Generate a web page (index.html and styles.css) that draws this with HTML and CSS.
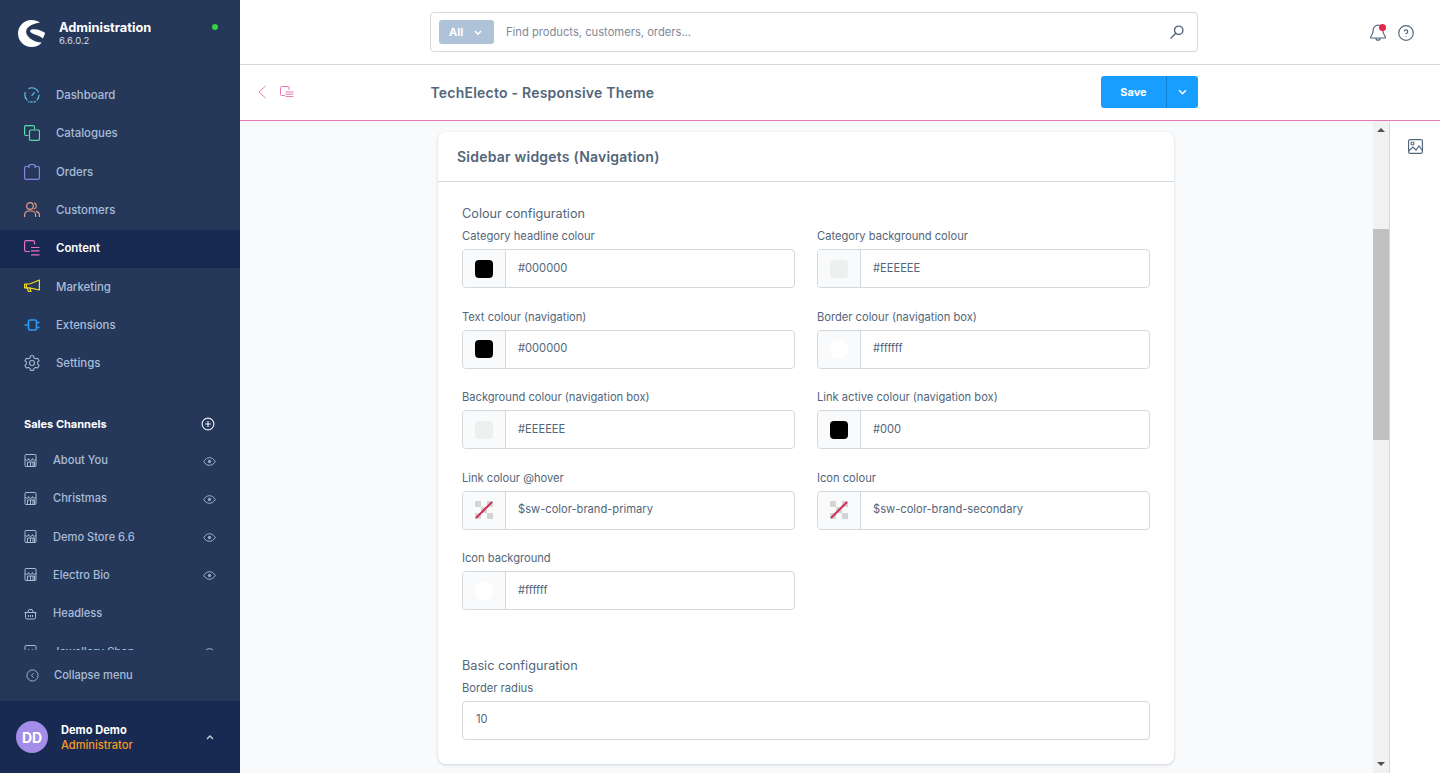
FILE: index.html
```html
<!DOCTYPE html>
<html lang="en">
<head>
<meta charset="utf-8">
<title>TechElecto - Responsive Theme</title>
<link rel="stylesheet" href="styles.css">
</head>
<body>
<div class="app">
  <aside class="sidebar">
    <div class="brand">
      <svg class="logo" viewBox="0 0 27 27"><path fill="#fff" d="M22 2.500C19.800.9 16.800 0 13.500 0 6 0 0 6 0 13.500S6 27 13.500 27c4.200 0 7.800-1.700 10.300-4.600-3.400-.1-8.800-1.300-12-4.200C8.600 15.300 7.400 12.500 8.500 9.700 10 6 16 3.400 22 2.500zM13.800 9.600c-1.400.4-2.100 1.200-1.500 2.100.9 1.300 3.300 2.300 6 3.200 2.800 1 5 1.900 6.500 3.500 1.100-1.700 2-3.800 2.200-5.600-3.800-2.300-9-4.300-13.200-3.200z"/></svg>
      <div class="brand-text">
        <div class="brand-name">Administration</div>
        <div class="brand-version">6.6.0.2</div>
      </div>
      <span class="status-dot"></span>
    </div>
    <nav class="main-nav">
      <a class="nav-item"><svg class="nav-icon" viewBox="0 0 16 16" fill="none" stroke="#5fc3e6" stroke-width="1.200" stroke-linecap="round"><path d="M5 1.400A7 7 0 0 1 14.300 5M15 8a7 7 0 0 1-1.900 4.800M3 12.900A7 7 0 0 1 1.300 5.500M10.300 5.700 8 8.300"/><path d="M11.500 14.800H4.500" stroke-dasharray="1.500 1.800"/></svg><span>Dashboard</span></a>
      <a class="nav-item"><svg class="nav-icon" viewBox="0 0 16 16" fill="none" stroke="#5bdba8" stroke-width="1.200"><path d="M4.500 10.500H2A1.500 1.500 0 0 1 .6 9V2A1.500 1.500 0 0 1 2 .6h7A1.500 1.500 0 0 1 10.500 2v2.500"/><rect x="5.500" y="5" width="10" height="10.400" rx="1.500"/></svg><span>Catalogues</span></a>
      <a class="nav-item"><svg class="nav-icon" viewBox="0 0 16 16" fill="none" stroke="#8b87e0" stroke-width="1.200"><path d="M5 2.500H2A1.500 1.500 0 0 0 .6 4v10A1.500 1.500 0 0 0 2 15.400h12a1.500 1.500 0 0 0 1.400-1.400V4A1.500 1.500 0 0 0 14 2.500h-3"/><path d="M5 4.200V1.500A1 1 0 0 1 6 .6h4a1 1 0 0 1 1 1v2.600"/></svg><span>Orders</span></a>
      <a class="nav-item"><svg class="nav-icon" viewBox="0 0 16 16" fill="none" stroke="#e79b80" stroke-width="1.200"><circle cx="6" cy="4" r="3.300"/><path d="M.6 15v-2a4 4 0 0 1 4-4h3a4 4 0 0 1 4 4v2M10 .8a3.300 3.300 0 0 1 0 6.300M12 9.300a4 4 0 0 1 3.400 3.700v2"/></svg><span>Customers</span></a>
      <a class="nav-item is-active"><svg class="nav-icon" viewBox="0 0 16 16" fill="none" stroke="#e56fc0" stroke-width="1.200"><path d="M6 11.500H2A1.500 1.500 0 0 1 .6 10V2A1.500 1.500 0 0 1 2 .6h7A1.500 1.500 0 0 1 10.500 2v2.500"/><path d="M7 7.500h8.500M7 10.800h8.500M7 14.800h8.500"/></svg><span>Content</span></a>
      <a class="nav-item"><svg class="nav-icon" viewBox="0 0 16 16" fill="none" stroke="#f5d922" stroke-width="1.200" stroke-linejoin="round"><path d="M.6 5h5L15.400 1v10L5.600 8.800h-5zM2.500 5v3.800M3 8.800l1.500 3.700H7L5.600 8.800"/></svg><span>Marketing</span></a>
      <a class="nav-item"><svg class="nav-icon" viewBox="0 0 16 16" fill="none" stroke="#2f9bef" stroke-width="1.600"><rect x="4.500" y="3" width="8" height="10" rx="1.500"/><path d="M.5 8h4M12.500 5.500h3M12.500 10.500h3"/></svg><span>Extensions</span></a>
      <a class="nav-item"><svg class="nav-icon" viewBox="0 0 16 16" fill="none" stroke="#a5b6cc" stroke-width="1.100" stroke-linejoin="round"><path d="M6.500.8h3l.4 2 1.700 1 2-.6 1.500 2.600-1.500 1.300v2l1.500 1.300-1.500 2.600-2-.6-1.700 1-.4 2h-3l-.4-2-1.700-1-2 .6L.9 10.400l1.500-1.300v-2L.9 5.800l1.500-2.600 2 .6 1.700-1z"/><circle cx="8" cy="8" r="2.500"/></svg><span>Settings</span></a>
    </nav>
    <div class="channels">
      <div class="channels-head">
        <span>Sales Channels</span>
        <svg class="head-plus" viewBox="0 0 14 14" fill="none" stroke="#dfe7f0" stroke-width="1.200"><circle cx="7" cy="7" r="5.900"/><path d="M7 4v6M4 7h6"/></svg>
      </div>
      <div class="channel"><svg class="channel-icon" viewBox="0 0 13 13" fill="none" stroke="#a9bbd2"><use href="#store"/></svg><span class="channel-name">About You</span><svg class="eye" viewBox="0 0 13 9" fill="none" stroke="#9db0c9"><use href="#eye"/></svg></div>
      <div class="channel"><svg class="channel-icon" viewBox="0 0 13 13" fill="none" stroke="#a9bbd2"><use href="#store"/></svg><span class="channel-name">Christmas</span><svg class="eye" viewBox="0 0 13 9" fill="none" stroke="#9db0c9"><use href="#eye"/></svg></div>
      <div class="channel"><svg class="channel-icon" viewBox="0 0 13 13" fill="none" stroke="#a9bbd2"><use href="#store"/></svg><span class="channel-name">Demo Store 6.6</span><svg class="eye" viewBox="0 0 13 9" fill="none" stroke="#9db0c9"><use href="#eye"/></svg></div>
      <div class="channel"><svg class="channel-icon" viewBox="0 0 13 13" fill="none" stroke="#a9bbd2"><use href="#store"/></svg><span class="channel-name">Electro Bio</span><svg class="eye" viewBox="0 0 13 9" fill="none" stroke="#9db0c9"><use href="#eye"/></svg></div>
      <div class="channel"><svg class="channel-icon" viewBox="0 0 13 13" fill="none" stroke="#a9bbd2"><path d="M1.500 5.500h10v5a1.500 1.500 0 0 1-1.500 1.500H3a1.500 1.500 0 0 1-1.500-1.500zM.5 5.500h12M3.500 5.500 5 2.500h3l1.500 3M4.500 8v2M6.500 8v2M8.500 8v2"/></svg><span class="channel-name">Headless</span></div>
      <div class="channel"><svg class="channel-icon" viewBox="0 0 13 13" fill="none" stroke="#a9bbd2"><use href="#store"/></svg><span class="channel-name">Jewellery Shop</span><svg class="eye" viewBox="0 0 13 9" fill="none" stroke="#9db0c9"><use href="#eye"/></svg></div>
    </div>
    <div class="collapse">
      <svg class="collapse-icon" viewBox="0 0 14 14" fill="none" stroke="#a9bbd2"><circle cx="7" cy="7" r="6"/><path d="M8.300 4.500 5.800 7l2.500 2.500"/></svg>
      <span>Collapse menu</span>
    </div>
    <div class="user">
      <div class="avatar">DD</div>
      <div class="user-text">
        <div class="user-name">Demo Demo</div>
        <div class="user-role">Administrator</div>
      </div>
      <svg class="user-caret" viewBox="0 0 8 5" fill="none" stroke="#c9d5e4" stroke-width="1.300"><path d="M1 4l3-3 3 3"/></svg>
    </div>
  </aside>

  <div class="main">
    <header class="topbar">
      <div class="search">
        <div class="search-type"><span>All</span><svg class="search-caret" viewBox="0 0 8 5" fill="none" stroke="#fff" stroke-width="1.600"><path d="M1 1l3 3 3-3"/></svg></div>
        <span class="search-text">Find products, customers, orders...</span>
        <svg class="search-icon" viewBox="0 0 14 14" fill="none" stroke="#56677d" stroke-width="1.400"><circle cx="8.700" cy="5.300" r="4.200"/><path d="M5.600 8.400 1 13" stroke-linecap="round"/></svg>
      </div>
      <div class="top-actions">
        <span class="bell-wrap">
          <svg class="bell" viewBox="0 0 16 17" fill="none" stroke="#56677d" stroke-width="1.200"><path d="M8 1.200a4.800 4.800 0 0 0-4.800 4.800c0 4.500-2.700 6.500-2.700 7.300 0 .4.300.7.800.7h13.400c.5 0 .8-.3.800-.7 0-.8-2.700-2.800-2.700-7.300A4.800 4.800 0 0 0 8 1.200zM6 14.200a2 2 0 0 0 4 0"/></svg>
          <span class="bell-dot"></span>
        </span>
        <svg class="help" viewBox="0 0 16 16" fill="none" stroke="#56677d" stroke-width="1.200"><circle cx="8" cy="8" r="7.300"/><path d="M6.200 6.300A1.800 1.800 0 1 1 8 8.500v.8M8 11v.8"/></svg>
      </div>
    </header>

    <div class="smartbar">
      <div class="smart-left">
        <svg class="back" viewBox="0 0 8 14" fill="none" stroke="#e57bb6" stroke-width="1"><path d="M7.500 1 1 7l6.500 6"/></svg>
        <svg class="crumb" viewBox="0 0 14 12" fill="none" stroke="#e57bb6" stroke-width="1"><path d="M5 9.500H1.500a1 1 0 0 1-1-1v-7a1 1 0 0 1 1-1h6.500a1 1 0 0 1 1 1v2.300"/><path d="M5.500 6h8M5.500 8.200h8M5.500 10.600h8"/></svg>
      </div>
      <h1 class="page-title">TechElecto - Responsive Theme</h1>
      <div class="save-group">
        <button class="save">Save</button>
        <button class="save-more"><svg class="save-caret" viewBox="0 0 8 5" fill="none" stroke="#fff" stroke-width="1.400"><path d="M1 1l3 3 3-3"/></svg></button>
      </div>
    </div>

    <div class="workspace">
      <div class="content">
        <section class="card">
          <h2 class="card-title">Sidebar widgets (Navigation)</h2>
          <div class="card-body">
            <h3 class="section-title">Colour configuration</h3>
            <div class="field-grid">
              <div class="field"><label>Category headline colour</label><div class="input"><span class="swatch-box"><i class="swatch black"></i></span><span class="value">#000000</span></div></div>
              <div class="field"><label>Category background colour</label><div class="input"><span class="swatch-box"><i class="swatch grey"></i></span><span class="value">#EEEEEE</span></div></div>
              <div class="field"><label>Text colour (navigation)</label><div class="input"><span class="swatch-box"><i class="swatch black"></i></span><span class="value">#000000</span></div></div>
              <div class="field"><label>Border colour (navigation box)</label><div class="input"><span class="swatch-box"><i class="swatch white"></i></span><span class="value">#ffffff</span></div></div>
              <div class="field"><label>Background colour (navigation box)</label><div class="input"><span class="swatch-box"><i class="swatch grey"></i></span><span class="value">#EEEEEE</span></div></div>
              <div class="field"><label>Link active colour (navigation box)</label><div class="input"><span class="swatch-box"><i class="swatch black"></i></span><span class="value">#000</span></div></div>
              <div class="field"><label>Link colour @hover</label><div class="input"><span class="swatch-box"><i class="swatch empty"><svg class="swatch-slash" viewBox="0 0 18 18"><path d="M1 17 17 1" stroke="#cf2f55" stroke-width="2"/></svg></i></span><span class="value">$sw-color-brand-primary</span></div></div>
              <div class="field"><label>Icon colour</label><div class="input"><span class="swatch-box"><i class="swatch empty"><svg class="swatch-slash" viewBox="0 0 18 18"><path d="M1 17 17 1" stroke="#cf2f55" stroke-width="2"/></svg></i></span><span class="value">$sw-color-brand-secondary</span></div></div>
              <div class="field"><label>Icon background</label><div class="input"><span class="swatch-box"><i class="swatch white"></i></span><span class="value">#ffffff</span></div></div>
            </div>
            <h3 class="section-title basic">Basic configuration</h3>
            <div class="field basic-field"><label>Border radius</label><div class="input"><span class="value plain">10</span></div></div>
          </div>
        </section>
      </div>
      <div class="scrollbar">
        <span class="arrow up"></span>
        <div class="track"><div class="thumb"></div></div>
        <span class="arrow down"></span>
      </div>
      <aside class="rail">
        <svg class="rail-icon" viewBox="0 0 15 15" fill="none" stroke="#56677d" stroke-width="1.200"><rect x=".6" y=".6" width="13.800" height="13.800" rx="1.500"/><circle cx="4.500" cy="4.500" r="1.500"/><path d="M.6 12 5 8l3 3 3-4 3.400 4.500"/></svg>
      </aside>
    </div>
  </div>
</div>
<svg class="defs" aria-hidden="true">
  <defs>
    <g id="store"><path d="M1 4.500V1.500a1 1 0 0 1 1-1h9a1 1 0 0 1 1 1v3M1 5v6.500a1 1 0 0 0 1 1h9a1 1 0 0 0 1-1V5M1 4.500a1.800 1.800 0 0 0 3.600 0 1.900 1.900 0 0 0 3.800 0 1.800 1.800 0 0 0 3.600 0M3.500 12.500V8h3v4.500M9 8v4.500M6.500 8H10.500v4.500"/></g>
    <g id="eye"><path d="M.7 4.500C2.200 2 4.200.7 6.500.7s4.300 1.300 5.800 3.800C10.800 7 8.800 8.300 6.500 8.300S2.200 7 .7 4.500z"/><circle cx="6.500" cy="4.500" r="1.200" fill="#9db0c9"/></g>
  </defs>
</svg>
</body>
</html>
```

FILE: styles.css
```css
* { box-sizing: border-box; }
html, body { margin: 0; height: 100%; }
body { font-family: Inter, "Noto Sans", sans-serif; overflow: hidden; color: #52667a; }
.defs { width: 0; height: 0; display: block; overflow: hidden; }
.app { display: flex; height: 773px; width: 1440px; overflow: hidden; }

/* Sidebar */
.sidebar { width: 240px; flex: none; background: #25385a; display: flex; flex-direction: column; color: #a9bdd8; }
.brand { height: 76.5px; flex: none; padding: 20px 22px 0 18px; display: flex; align-items: flex-start; }
.logo { width: 27px; height: 27px; flex: none; }
.brand-text { margin-left: 14px; }
.brand-name { font-size: 12.8px; font-weight: 700; line-height: 15px; color: #fff; }
.brand-version { font-size: 9.5px; line-height: 11px; color: #d5dfeb; }
.status-dot { width: 6px; height: 6px; border-radius: 50%; background: #37d046; margin-left: auto; margin-top: 4px; }

.main-nav { flex: none; display: flex; flex-direction: column; }
.nav-item { height: 38.3px; display: flex; align-items: center; padding: 0 0 1px 24px; font-size: 11.4px; font-weight: 500; }
.nav-item.is-active { background: #182a52; color: #fff; font-weight: 600; }
.nav-icon { width: 16px; height: 16px; flex: none; margin-right: 16px; }

.channels { margin-top: 24px; flex: 1; min-height: 0; overflow: hidden; }
.channels-head { height: 34px; display: flex; align-items: center; justify-content: space-between; padding: 0 24px; font-size: 11px; font-weight: 700; color: #fff; }
.head-plus { width: 14px; height: 14px; margin-right: 1px; }
.channel { height: 38.3px; display: flex; align-items: center; padding: 0 24px; font-size: 11.1px; font-weight: 500; }
.channel-icon { width: 13px; height: 13px; flex: none; margin-right: 16px; }
.channel-name { flex: 1; }
.eye { width: 13px; height: 9px; flex: none; margin-top: 2px; }

.collapse { height: 51px; flex: none; display: flex; align-items: center; padding: 0 0 1px 26px; font-size: 11.1px; font-weight: 500; }
.collapse-icon { width: 13px; height: 13px; flex: none; margin-right: 15px; }

.user { height: 72px; flex: none; background: #182a52; display: flex; align-items: center; padding: 0 26px 0 16px; }
.avatar { width: 32px; height: 32px; border-radius: 50%; background: #a48de8; color: #fff; font-size: 14px; font-weight: 700; display: flex; align-items: center; justify-content: center; flex: none; }
.user-text { margin-left: 13px; flex: 1; padding-top: 2px; }
.user-name { font-size: 11.1px; font-weight: 700; color: #fff; line-height: 15px; }
.user-role { font-size: 11.1px; font-weight: 500; color: #f59a23; line-height: 15px; }
.user-caret { width: 8px; height: 5px; flex: none; }

/* Main */
.main { flex: 1; min-width: 0; display: flex; flex-direction: column; background: #fff; }
.topbar { height: 65px; flex: none; border-bottom: 1px solid #d4d9de; display: flex; align-items: flex-start; padding: 12px 0 0 190px; }
.search { width: 768px; height: 40px; border: 1px solid #d4d9de; border-radius: 4px; display: flex; align-items: center; padding: 0 13px 0 8px; }
.search-type { width: 55px; height: 24px; background: #aec2d8; border-radius: 3px; color: #fff; font-size: 11px; font-weight: 700; display: flex; align-items: center; padding-left: 10px; }
.search-caret { width: 8px; height: 5px; margin-left: 11px; }
.search-text { margin-left: 12px; font-size: 11.2px; color: #7f8a96; flex: 1; }
.search-icon { width: 14px; height: 14px; }
.top-actions { display: flex; align-items: flex-start; margin-left: 172px; margin-top: 12px; }
.bell-wrap { position: relative; display: block; width: 16px; height: 17px; }
.bell { width: 16px; height: 17px; display: block; }
.bell-dot { position: absolute; right: 0; top: 0; width: 7px; height: 7px; background: #de294c; border-radius: 50%; }
.help { width: 16px; height: 16px; margin-left: 12px; margin-top: 1px; }

.smartbar { height: 56px; flex: none; border-bottom: 1px solid #e57bb6; display: flex; align-items: center; padding-right: 242px; }
.smart-left { width: 191px; padding: 0 0 1px 18px; display: flex; align-items: center; flex: none; }
.back { width: 8px; height: 14px; flex: none; }
.crumb { width: 14px; height: 12px; flex: none; margin-left: 14px; }
.page-title { flex: 1; margin: 0 0 0 -.5px; font-size: 14px; font-weight: 600; color: #52667a; letter-spacing: .22px; }
.save-group { display: flex; height: 32px; margin-top: -2px; }
.save { width: 66px; height: 32px; border: 0; background: #189eff; color: #fff; font: 700 11px Inter, sans-serif; border-radius: 3px 0 0 3px; border-right: 1px solid #0f7fd0; padding: 0; }
.save-more { width: 31px; height: 32px; border: 0; background: #189eff; border-radius: 0 3px 3px 0; display: flex; align-items: center; justify-content: center; padding: 0; }
.save-caret { width: 9px; height: 6px; }

.workspace { flex: 1; min-height: 0; display: flex; background: #f9fafb; }
.content { flex: 1; min-width: 0; overflow: hidden; padding: 11px 0 0 198px; }
.card { width: 736px; height: 632px; background: #fff; border-radius: 8px; box-shadow: 0 1px 3px rgba(120,138,155,.35); }
.card-title { height: 50px; margin: 0; border-bottom: 1px solid #d4d9de; padding: 0 19px; font-size: 14px; font-weight: 600; color: #52667a; line-height: 50px; letter-spacing: .22px; }
.card-body { padding: 24px 24px 0; }
.section-title { margin: 0; font-size: 12.7px; font-weight: 400; color: #52667a; line-height: 16px; }
.section-title.basic { margin-top: 47px; }
.field-grid { display: grid; grid-template-columns: 333px 333px; column-gap: 22px; row-gap: 20px; margin-top: 6px; }
.field label { display: block; font-size: 11.15px; line-height: 16px; color: #52667a; margin-bottom: 5px; }
.basic-field { margin-top: 6px; }
.input { height: 39px; border: 1px solid #d4d9de; border-radius: 4px; display: flex; align-items: center; background: #fff; font-size: 11.15px; color: #52667a; }
.field-grid .field { height: 60.5px; }
.swatch-box { width: 43px; height: 100%; flex: none; background: #f9fafb; border-right: 1px solid #d4d9de; display: flex; align-items: center; justify-content: center; border-radius: 4px 0 0 4px; }
.swatch { width: 18px; height: 18px; border-radius: 4px; display: block; position: relative; }
.swatch.black { background: #000; }
.swatch.grey { background: #eef0f0; }
.swatch.white { background: #fff; border-radius: 8px; }
.swatch.empty { border-radius: 0; background: conic-gradient(#d4d4d4 25%, transparent 0 50%, #d4d4d4 0 75%, transparent 0) -6px 0 / 12px 12px; }
.swatch-slash { width: 18px; height: 18px; position: absolute; left: 0; top: 0; }
.value { padding-left: 12px; margin-bottom: 2px; }
.value.plain { padding-left: 13px; }

.scrollbar { width: 16px; flex: none; background: #f1f1f1; display: flex; flex-direction: column; align-items: center; }
.arrow { flex: none; width: 0; height: 0; border-left: 4px solid transparent; border-right: 4px solid transparent; }
.arrow.up { border-bottom: 4px solid #505050; margin: 7px 0 6px; }
.arrow.down { border-top: 4px solid #505050; margin: 4px 0 7px; }
.track { flex: 1; width: 100%; padding-top: 91px; }
.thumb { height: 211px; background: #c1c1c1; }
.rail { width: 51px; flex: none; background: #fff; border-left: 1px solid #d4d9de; display: flex; justify-content: center; padding-top: 18px; }
.rail-icon { width: 15px; height: 15px; }
```
